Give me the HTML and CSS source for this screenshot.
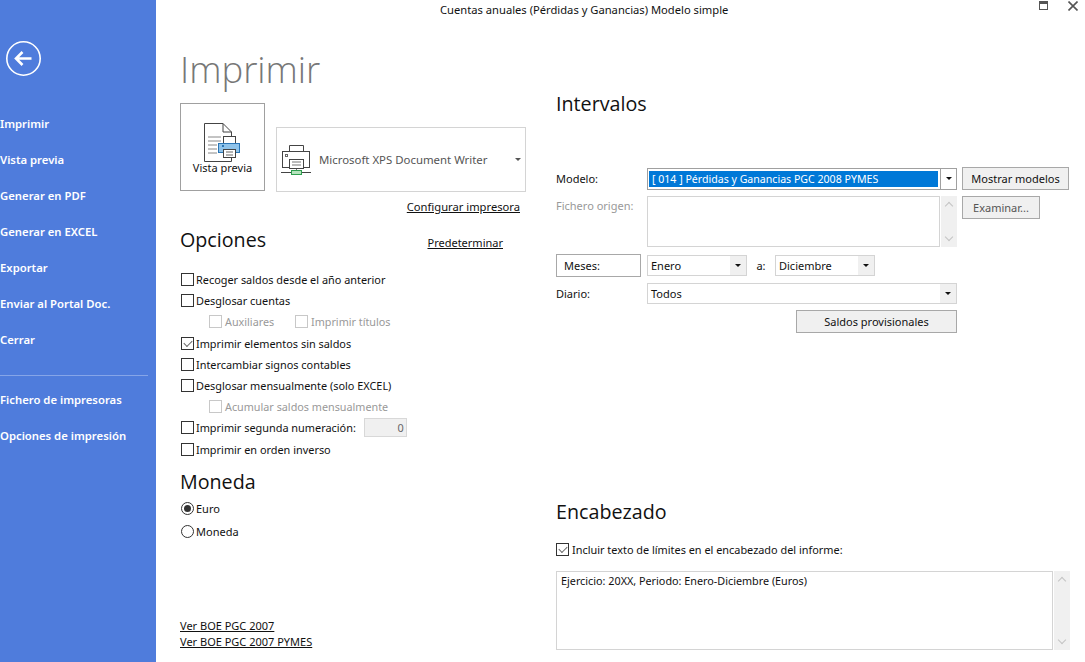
FILE: index.html
```html
<!DOCTYPE html>
<html lang="es">
<head>
    <meta charset="UTF-8">
    <title>Imprimir</title>
    <link rel="stylesheet" href="styles.css">
</head>
<body>
    <div class="side-panel">
        <svg class="back-icon" width="36" height="36" viewBox="0 0 36 36">
            <circle cx="17.5" cy="18.5" r="16.7" fill="none" stroke="#fff" stroke-width="1.6"/>
            <path d="M9.5 18.5H25.5M16.5 12L10 18.5L16.5 25" fill="none" stroke="#fff" stroke-width="2.6"/>
        </svg>
        <ul class="nav">
            <li>Imprimir</li>
            <li>Vista previa</li>
            <li>Generar en PDF</li>
            <li>Generar en EXCEL</li>
            <li>Exportar</li>
            <li>Enviar al Portal Doc.</li>
            <li>Cerrar</li>
        </ul>
        <div class="nav-divider"></div>
        <ul class="nav">
            <li>Fichero de impresoras</li>
            <li>Opciones de impresión</li>
        </ul>
    </div>
    <div class="main">
        <div class="title-bar">
            <span class="window-title">Cuentas anuales (Pérdidas y Ganancias) Modelo simple</span>
            <div class="window-buttons">
                <svg width="9" height="9" viewBox="0 0 9 9">
                    <rect x="0.5" y="0.5" width="8" height="8" fill="none" stroke="#555"/>
                    <rect x="0" y="0" width="9" height="3" fill="#555"/>
                </svg>
                <svg width="10" height="10" viewBox="0 0 10 10">
                    <path d="M0.5 0.5L9.5 9.5M9.5 0.5L0.5 9.5" stroke="#555" stroke-width="1.6"/>
                </svg>
            </div>
        </div>
        <div class="columns">
            <div class="col-left">
                <h1>Imprimir</h1>
                <div class="print-row">
                    <div class="preview-btn">
                        <svg width="37" height="39" viewBox="0 0 37 39">
                            <path d="M0.5 0.5H19L27.5 9V38.5H0.5Z" fill="#fff" stroke="#444"/>
                            <path d="M19 0.5V9H27.5" fill="none" stroke="#444"/>
                            <path d="M4 14H17M4 18H17M4 22H13M4 26H13M4 30H13" stroke="#888"/>
                            <rect x="19.5" y="13.5" width="12" height="8" fill="#fff" stroke="#444"/>
                            <rect x="14.5" y="20.5" width="21" height="9" fill="#8fc3ea" stroke="#2a75b5"/>
                            <rect x="18" y="22" width="2" height="2" fill="#2a75b5"/>
                            <rect x="19.5" y="26.5" width="12" height="8" fill="#fff" stroke="#444"/>
                            <path d="M22 29H29M22 32H29" stroke="#666"/>
                        </svg>
                        <span>Vista previa</span>
                    </div>
                    <div class="printer-select">
                        <svg width="31" height="30" viewBox="0 0 31 30">
                            <path d="M8.5 6.5V0.5H22.5V6.5" fill="none" stroke="#444"/>
                            <rect x="1.5" y="6.5" width="27" height="16" fill="#fff" stroke="#444"/>
                            <rect x="4.5" y="9.5" width="2" height="2" fill="none" stroke="#666"/>
                            <rect x="8.5" y="14.5" width="14" height="9" fill="#fff" stroke="#444"/>
                            <path d="M11 17H20M11 20H20" stroke="#777"/>
                            <path d="M15.5 24V26" stroke="#777"/>
                            <path d="M0 27.5H30" stroke="#444"/>
                            <rect x="10.5" y="25.5" width="10" height="4" fill="#b6e3bd" stroke="#2f9e4f"/>
                        </svg>
                        <span class="printer-name">Microsoft XPS Document Writer</span>
                        <i class="caret small"></i>
                    </div>
                </div>
                <div class="config-row"><a href="#">Configurar impresora</a></div>
                <div class="options-head">
                    <h2>Opciones</h2>
                    <a href="#">Predeterminar</a>
                </div>
                <div class="options">
                    <div class="opt"><i class="check"></i>Recoger saldos desde el año anterior</div>
                    <div class="opt"><i class="check"></i>Desglosar cuentas</div>
                    <div class="opt sub muted">
                        <i class="check off"></i><span class="sub-first">Auxiliares</span>
                        <i class="check off"></i>Imprimir títulos
                    </div>
                    <div class="opt"><i class="check on"></i>Imprimir elementos sin saldos</div>
                    <div class="opt"><i class="check"></i>Intercambiar signos contables</div>
                    <div class="opt"><i class="check"></i>Desglosar mensualmente (solo EXCEL)</div>
                    <div class="opt sub muted"><i class="check off"></i>Acumular saldos mensualmente</div>
                    <div class="opt"><i class="check"></i>Imprimir segunda numeración:<span class="num-input">0</span></div>
                    <div class="opt"><i class="check"></i>Imprimir en orden inverso</div>
                </div>
                <h2 class="moneda-head">Moneda</h2>
                <div class="radio-row"><i class="radio on"></i>Euro</div>
                <div class="radio-row"><i class="radio"></i>Moneda</div>
                <div class="boe-links">
                    <a href="#">Ver BOE PGC 2007</a>
                    <a href="#">Ver BOE PGC 2007 PYMES</a>
                </div>
            </div>
            <div class="col-right">
                <h2 class="intervalos-head">Intervalos</h2>
                <div class="form-row modelo-row">
                    <label>Modelo:</label>
                    <div class="select strong wide"><span class="selected">[ 014 ] Pérdidas y Ganancias PGC 2008 PYMES</span><b><i class="caret"></i></b></div>
                    <div class="btn">Mostrar modelos</div>
                </div>
                <div class="form-row origen-row">
                    <label class="muted">Fichero origen:</label>
                    <div class="text-area origen-area">
                        <div class="text-box"></div>
                        <div class="scroll"><span class="chev up"></span><span class="chev down"></span></div>
                    </div>
                    <div class="btn disabled">Examinar...</div>
                </div>
                <div class="form-row meses-row">
                    <div class="meses-box">Meses:</div>
                    <div class="select month"><span>Enero</span><b><i class="caret"></i></b></div>
                    <span class="to">a:</span>
                    <div class="select month"><span>Diciembre</span><b><i class="caret"></i></b></div>
                </div>
                <div class="form-row diario-row">
                    <label>Diario:</label>
                    <div class="select wide"><span>Todos</span><b><i class="caret"></i></b></div>
                </div>
                <div class="saldos-row"><div class="btn saldos">Saldos provisionales</div></div>
                <h2 class="encabezado-head">Encabezado</h2>
                <div class="opt"><i class="check on"></i>Incluir texto de límites en el encabezado del informe:</div>
                <div class="text-area header-area">
                    <div class="text-box">Ejercicio: 20XX, Periodo: Enero-Diciembre (Euros)</div>
                    <div class="scroll"><span class="chev up"></span><span class="chev down"></span></div>
                </div>
            </div>
        </div>
    </div>
</body>
</html>
```

FILE: styles.css
```css
* {
    box-sizing: border-box;
}
html, body {
    height: 100%;
}
body {
    font-family: "Noto Sans", "Open Sans", sans-serif;
    font-size: 11px;
    color: #111;
    background: #fff;
    display: flex;
    margin: 0;
    overflow: hidden;
}
a {
    color: #111;
}
ul {
    list-style: none;
    margin: 0;
    padding: 0;
}
h1, h2 {
    font-family: "Open Sans", sans-serif;
    font-weight: 400;
    margin: 0;
}
h1 {
    font-size: 36.5px;
    font-weight: 300;
    line-height: 50px;
    color: #777;
}
h2 {
    font-size: 19.7px;
    line-height: 28px;
    color: #111;
}

/* side panel */
.side-panel {
    width: 156px;
    flex-shrink: 0;
    height: 662px;
    background: #4f7cdc;
    color: #fff;
    padding-top: 40px;
}
.back-icon {
    display: block;
    margin: 0 0 40px 6px;
}
.nav li {
    height: 36px;
    line-height: 16px;
    font-weight: 600;
    font-size: 11.3px;
}
.nav-divider {
    width: 148px;
    border-top: 1px solid #86a5e8;
    margin: 7px 0 16px;
}

/* window title */
.main {
    flex: 1;
    min-width: 0;
    height: 662px;
}
.title-bar {
    height: 18px;
    display: flex;
    align-items: center;
    padding-left: 284px;
}
.window-title {
    font-size: 11.2px;
}
.window-buttons {
    margin-left: auto;
    margin-right: 7px;
    margin-top: -7px;
    display: flex;
    gap: 20px;
}
.columns {
    display: flex;
    padding-left: 24px;
}
.col-left {
    width: 376px;
    flex-shrink: 0;
    padding-top: 26px;
}
.col-right {
    flex: 1;
    padding-top: 72px;
}

/* printer */
.print-row {
    display: flex;
    align-items: flex-end;
    margin-top: 9px;
}
.preview-btn {
    width: 85px;
    height: 88px;
    border: 1px solid #a0a0a0;
    display: flex;
    flex-direction: column;
    align-items: center;
    padding-top: 19px;
}
.preview-btn span {
    margin-top: -2px;
    line-height: 16px;
}
.printer-select {
    width: 250px;
    height: 65px;
    margin-left: 11px;
    margin-bottom: -1px;
    border: 1px solid #d4d4d4;
    display: flex;
    align-items: center;
    padding-left: 4px;
}
.printer-name {
    margin-left: 7px;
    font-size: 11.4px;
    color: #555;
    flex: 1;
}
.caret {
    display: block;
    width: 0;
    height: 0;
    border-left: 3px solid transparent;
    border-right: 3px solid transparent;
    border-top: 3px solid #111;
}
.caret.small {
    margin-right: 4px;
    border-top-color: #555;
}
.config-row {
    width: 340px;
    text-align: right;
    margin-top: 8px;
    line-height: 16px;
    font-size: 11.2px;
}
.options-head {
    display: flex;
    justify-content: space-between;
    align-items: center;
    width: 323px;
    margin-top: 11px;
}
.options-head a {
    margin-top: 4px;
}

/* checkboxes */
.options {
    margin-top: 15px;
}
.opt {
    display: flex;
    align-items: center;
    height: 21.2px;
    margin-left: 1px;
    font-size: 10.9px;
}
.check {
    width: 13px;
    height: 13px;
    border: 1px solid #333;
    margin-right: 2px;
    flex-shrink: 0;
    position: relative;
}
.check.off {
    border-color: #c8c8c8;
    margin-right: 3px;
}
.check.on::after {
    content: "";
    position: absolute;
    left: 2px;
    top: 0;
    width: 7px;
    height: 4px;
    margin-top: 2px;
    border-left: 1.5px solid #666;
    border-bottom: 1.5px solid #666;
    transform: rotate(-45deg);
}
.sub {
    padding-left: 28px;
}
.sub-first {
    width: 70px;
}
.muted {
    color: #999;
}
.opt.muted {
    font-size: 10.8px;
}
.num-input {
    width: 43px;
    height: 19px;
    margin-left: 8px;
    background: #f0f0f0;
    border: 1px solid #d8d8d8;
    text-align: right;
    line-height: 17px;
    padding-right: 2px;
    color: #666;
}
.moneda-head {
    margin-top: 8px;
}
.radio-row {
    display: flex;
    align-items: center;
    height: 23px;
    margin-left: 1px;
}
.moneda-head + .radio-row {
    margin-top: 1px;
}
.radio {
    width: 13px;
    height: 13px;
    border: 1px solid #333;
    border-radius: 50%;
    margin-right: 2px;
    display: flex;
    align-items: center;
    justify-content: center;
}
.radio.on::after {
    content: "";
    width: 7px;
    height: 7px;
    border-radius: 50%;
    background: #333;
}
.boe-links {
    margin-top: 75px;
    display: flex;
    flex-direction: column;
    align-items: flex-start;
    line-height: 16px;
}

/* right column */
.form-row {
    display: flex;
    align-items: center;
}
.form-row label {
    width: 91px;
    flex-shrink: 0;
}
.modelo-row {
    margin-top: 49px;
    height: 23px;
}
.origen-row {
    margin-top: 6px;
    align-items: flex-start;
}
.origen-row label {
    margin-top: 2px;
}
.meses-row {
    margin-top: 7px;
    height: 23px;
}
.diario-row {
    margin-top: 6px;
    height: 21px;
}
.select {
    height: 21px;
    border: 1px solid #d4d4d4;
    display: flex;
    align-items: center;
    padding-left: 3px;
}
.select span {
    flex: 1;
    white-space: nowrap;
}
.select b {
    width: 16px;
    height: 100%;
    background: #f0f0f0;
    display: flex;
    align-items: center;
    justify-content: center;
}
.select.wide {
    width: 310px;
}
.select.strong {
    height: 22px;
    border-color: #a0a0a0;
    padding-left: 1px;
}
.select.strong b {
    background: #fff;
    border-left: 1px solid #a0a0a0;
    margin-left: 2px;
}
.selected {
    background: #0078d7;
    color: #fff;
    height: 16px;
    line-height: 16px;
    padding-left: 3px;
    font-size: 10.6px;
}
.select.month {
    width: 100px;
}
.to {
    width: 28px;
    text-align: center;
}
.btn {
    height: 23px;
    line-height: 21px;
    border: 1px solid #a8a8a8;
    background: #f0f0f0;
    text-align: center;
    margin-left: 5px;
}
.modelo-row .btn {
    width: 107px;
}
.btn.disabled {
    width: 78px;
    color: #555;
}
.meses-box {
    width: 85px;
    height: 23px;
    line-height: 21px;
    border: 1px solid #a8a8a8;
    padding-left: 7px;
    margin-right: 6px;
}
.saldos-row {
    display: flex;
    padding-left: 240px;
    margin-top: 6px;
}
.saldos {
    width: 161px;
    margin-left: 0;
}
.text-area {
    display: flex;
    gap: 1px;
}
.text-box {
    flex: 1;
    border: 1px solid #d4d4d4;
    padding: 1px 4px;
    font-size: 10.8px;
}
.scroll {
    width: 16px;
    background: #f0f0f0;
    display: flex;
    flex-direction: column;
    justify-content: space-between;
    align-items: center;
    padding: 7px 0;
}
.chev {
    width: 6px;
    height: 6px;
    border-left: 1.5px solid #c4c4c4;
    border-top: 1.5px solid #c4c4c4;
}
.chev.up {
    transform: rotate(45deg);
}
.chev.down {
    transform: rotate(225deg);
}
.origen-area {
    width: 310px;
    height: 51px;
}
.encabezado-head {
    margin-top: 165px;
}
.col-right > .opt {
    margin-top: 13px;
    margin-left: 0;
}
.col-right > .opt .check {
    margin-right: 3px;
}
.header-area {
    width: 514px;
    height: 79px;
    margin-top: 11px;
}
```
